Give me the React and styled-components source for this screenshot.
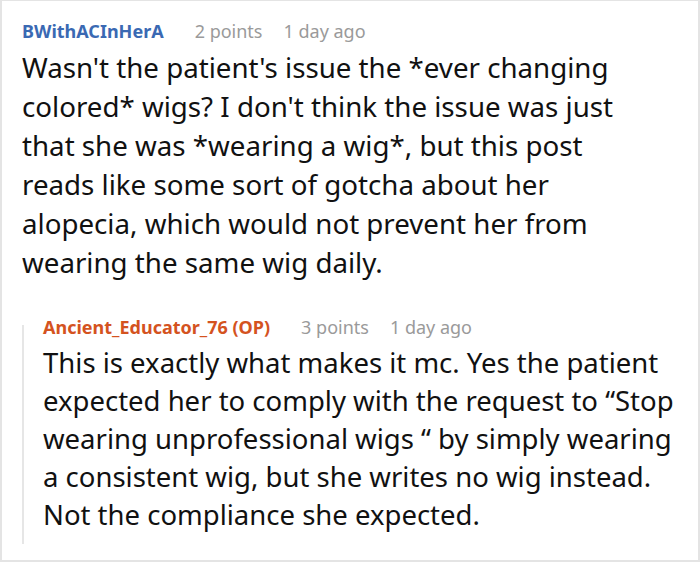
import React from "react";
import styled, { createGlobalStyle } from "styled-components";

const Global = createGlobalStyle`
  html, body { margin: 0; padding: 0; background: #fff; }
  body { font-family: "Noto Sans", sans-serif; }
`;

const Frame = styled.div`
  box-sizing: border-box;
  width: 700px;
  height: 562px;
  border: 2px solid #e4e4e4;
  border-top: 1px solid #e4e4e4;
  padding: 17px 0 0 20px;
  overflow: hidden;
`;

const Comment = styled.div`
  display: flex;
  flex-direction: column;
`;

const Meta = styled.div`
  display: flex;
  align-items: baseline;
  font-size: 18px;
  line-height: 26px;
  height: 26px;
  white-space: nowrap;
`;

const Author = styled.span`
  font-weight: 700;
  color: ${(p) => (p.$op ? "#d4531f" : "#3a69b3")};
  margin-right: 31px;
`;

const Info = styled.span`
  color: #9a9a9a;
  margin-right: 21px;
`;

const Body = styled.p`
  margin: 4px 0 0;
  font-size: ${(p) => p.$fs}px;
  line-height: ${(p) => p.$lh}px;
  color: #111;
  white-space: nowrap;
`;

const Replies = styled.div`
  position: relative;
  margin-top: 32px;
  padding: 0 0 10px 21px;
  &::before {
    content: "";
    position: absolute;
    left: 0;
    top: 11px;
    bottom: 0;
    width: 2px;
    background: #e6e6e6;
  }
`;

export default function App() {
  return (
    <>
      <Global />
      <Frame>
        <Comment>
          <Meta>
            <Author>BWithACInHerA</Author>
            <Info>2 points</Info>
            <Info>1 day ago</Info>
          </Meta>
          <Body $fs={27.7} $lh={39}>
            Wasn't the patient's issue the *ever changing
            <br />
            colored* wigs? I don't think the issue was just
            <br />
            that she was *wearing a wig*, but this post
            <br />
            reads like some sort of gotcha about her
            <br />
            alopecia, which would not prevent her from
            <br />
            wearing the same wig daily.
          </Body>
        </Comment>
        <Replies>
          <Comment>
            <Meta>
              <Author $op>Ancient_Educator_76 (OP)</Author>
              <Info>3 points</Info>
              <Info>1 day ago</Info>
            </Meta>
            <Body $fs={27.5} $lh={38}>
              This is exactly what makes it mc. Yes the patient
              <br />
              expected her to comply with the request to “Stop
              <br />
              wearing unprofessional wigs “ by simply wearing
              <br />
              a consistent wig, but she writes no wig instead.
              <br />
              Not the compliance she expected.
            </Body>
          </Comment>
        </Replies>
      </Frame>
    </>
  );
}
